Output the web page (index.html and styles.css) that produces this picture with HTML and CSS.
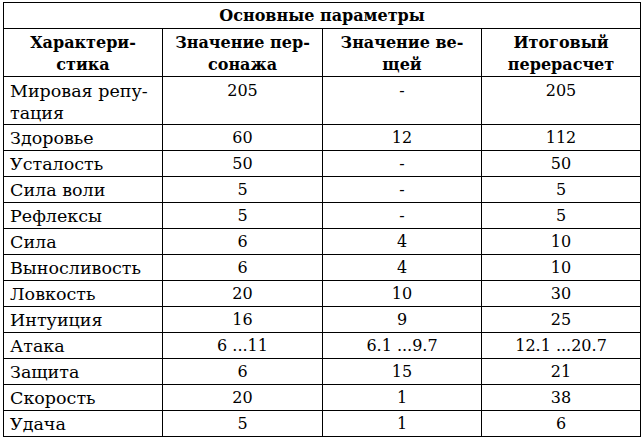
FILE: index.html
```html
<!DOCTYPE html>
<html lang="ru">
<head>
<meta charset="utf-8">
<title>Основные параметры</title>
<link rel="stylesheet" href="styles.css">
</head>
<body>
<div class="page">
<table class="params">
<colgroup><col class="c1"><col class="c2"><col class="c3"><col class="c4"></colgroup>
<tr class="title"><th colspan="4">Основные параметры</th></tr>
<tr class="head"><th>Характери-<br>стика</th><th>Значение пер-<br>сонажа</th><th>Значение ве-<br>щей</th><th>Итоговый<br>перерасчет</th></tr>
<tr class="tall"><td class="name">Мировая репу-<br>тация</td><td>205</td><td>-</td><td>205</td></tr>
<tr><td class="name">Здоровье</td><td>60</td><td>12</td><td>112</td></tr>
<tr><td class="name">Усталость</td><td>50</td><td>-</td><td>50</td></tr>
<tr><td class="name">Сила воли</td><td>5</td><td>-</td><td>5</td></tr>
<tr><td class="name">Рефлексы</td><td>5</td><td>-</td><td>5</td></tr>
<tr><td class="name">Сила</td><td>6</td><td>4</td><td>10</td></tr>
<tr><td class="name">Выносливость</td><td>6</td><td>4</td><td>10</td></tr>
<tr><td class="name">Ловкость</td><td>20</td><td>10</td><td>30</td></tr>
<tr><td class="name">Интуиция</td><td>16</td><td>9</td><td>25</td></tr>
<tr><td class="name">Атака</td><td>6 ...11</td><td>6.1 ...9.7</td><td>12.1 ...20.7</td></tr>
<tr><td class="name">Защита</td><td>6</td><td>15</td><td>21</td></tr>
<tr><td class="name">Скорость</td><td>20</td><td>1</td><td>38</td></tr>
<tr><td class="name">Удача</td><td>5</td><td>1</td><td>6</td></tr>
</table>
</div>
</body>
</html>
```
FILE: styles.css
```css
html, body {
  margin: 0;
  padding: 0;
  background: #fff;
}
.page {
  padding: 2px 0 0 3px;
}
.params {
  border-collapse: collapse;
  table-layout: fixed;
  width: 637px;
  font-family: "DejaVu Serif", "Liberation Serif", serif;
  font-size: 16px;
  color: #000;
}
.c1 { width: 159px; }
.c2 { width: 160px; }
.c3 { width: 159px; }
.c4 { width: 159px; }
.params th, .params td {
  border: 1.5px solid #000;
  padding: 0 6px;
  line-height: 22px;
  text-align: center;
  vertical-align: top;
  height: 25px;
}
.params th {
  font-weight: bold;
}
.params td {
  padding-top: 2px;
  height: 23px;
}
.params .title th {
  padding-top: 2px;
  height: 23px;
}
.params .head th {
  height: 44px;
  padding-top: 3px;
}
.params .tall td {
  height: 44px;
  padding-top: 3px;
}
.params td.name {
  text-align: left;
  font-size: 17.5px;
  padding-left: 6px;
  padding-right: 2px;
}
```
